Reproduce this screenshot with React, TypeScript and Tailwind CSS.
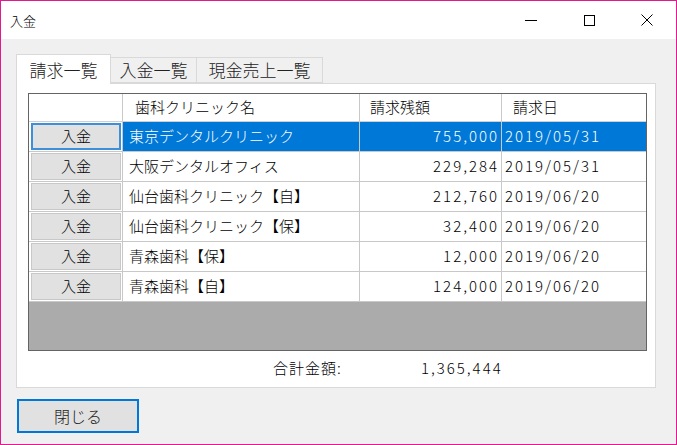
const rows = [
  { name: "東京デンタルクリニック", amount: "755,000", date: "2019/05/31" },
  { name: "大阪デンタルオフィス", amount: "229,284", date: "2019/05/31" },
  { name: "仙台歯科クリニック【自】", amount: "212,760", date: "2019/06/20" },
  { name: "仙台歯科クリニック【保】", amount: "32,400", date: "2019/06/20" },
  { name: "青森歯科【保】", amount: "12,000", date: "2019/06/20" },
  { name: "青森歯科【自】", amount: "124,000", date: "2019/06/20" },
]

const font = { fontFamily: '"Noto Sans CJK JP", "Noto Sans", sans-serif' }

export default function App() {
  return (
    <div
      className="w-[677px] h-[445px] flex flex-col border border-[#e3198f] bg-[#f0f0f0] text-black overflow-hidden font-light"
      style={font}
    >
      {/* title bar */}
      <div className="h-[38px] bg-white flex items-center shrink-0">
        <span className="pl-[9px] text-[13px] leading-none">入金</span>
        <div className="ml-auto flex h-full">
          <div className="w-[58px] flex items-center justify-center">
            <div className="w-[12px] h-px bg-black" />
          </div>
          <div className="w-[58px] flex items-center justify-center">
            <div className="w-[11px] h-[11px] border border-black" />
          </div>
          <div className="w-[58px] flex items-center justify-center">
            <svg width="12" height="12" viewBox="0 0 12 12">
              <path d="M0.5 0.5 L11.5 11.5 M11.5 0.5 L0.5 11.5" stroke="black" strokeWidth="1" />
            </svg>
          </div>
        </div>
      </div>

      {/* body */}
      <div className="flex-1 pl-[15px] pr-[20px] pt-[15px] flex flex-col">
        {/* tabs */}
        <div className="flex items-end h-[29px] relative z-10">
          <div className="w-[95px] h-[30px] bg-white border border-b-0 border-[#d9d9d9] flex items-center justify-center text-[17px] text-[#222] mb-[-1px]">
            請求一覧
          </div>
          <div className="w-[86px] h-[26px] bg-[#f0f0f0] border border-l-0 border-[#d9d9d9] flex items-center justify-center text-[17px] text-[#222]">
            入金一覧
          </div>
          <div className="w-[126px] h-[26px] bg-[#f0f0f0] border border-l-0 border-[#d9d9d9] flex items-center justify-center text-[17px] text-[#222]">
            現金売上一覧
          </div>
        </div>

        {/* panel */}
        <div className="h-[305px] bg-white border border-[#d9d9d9] pl-[11px] pr-[8px] pt-[9px] flex flex-col">
          <div className="h-[258px] border border-[#646464] bg-[#ababab] flex flex-col text-[15px]">
            {/* header */}
            <div className="flex h-[28px] bg-white border-b border-[#d0d0d0] shrink-0">
              <div className="w-[94px] border-r border-[#c8c8c8]" />
              <div className="w-[237px] border-r border-[#c8c8c8] pl-[12px] flex items-center">歯科クリニック名</div>
              <div className="w-[142px] border-r border-[#c8c8c8] pl-[10px] flex items-center">請求残額</div>
              <div className="flex-1 pl-[11px] flex items-center">請求日</div>
            </div>
            {rows.map((r, i) => {
              const sel = i === 0
              return (
                <div key={i} className="flex h-[30px] border-b border-[#c8c8c8] shrink-0">
                  <div className="w-[94px] bg-white border-r border-[#c8c8c8] p-[1px] pl-[2px]">
                    <div
                      className={`h-full flex items-center justify-center bg-[#e1e1e1] border ${
                        sel ? "border-[#3c8fd8] border-2" : "border-[#c8c8c8]"
                      }`}
                    >
                      入金
                    </div>
                  </div>
                  <div
                    className={`w-[237px] border-r border-[#c8c8c8] pl-[6px] flex items-center ${
                      sel ? "bg-[#0078d7] text-white" : "bg-white"
                    }`}
                  >
                    {r.name}
                  </div>
                  <div
                    className={`w-[142px] border-r border-[#c8c8c8] pr-[2px] flex items-center justify-end tracking-[2px] ${
                      sel ? "bg-[#0078d7] text-white" : "bg-white"
                    }`}
                  >
                    {r.amount}
                  </div>
                  <div
                    className={`flex-1 pl-[3px] flex items-center tracking-[2px] ${
                      sel ? "bg-[#0078d7] text-white" : "bg-white"
                    }`}
                  >
                    {r.date}
                  </div>
                </div>
              )
            })}
          </div>

          {/* total */}
          <div className="flex items-center h-[34px] text-[15px]">
            <span className="ml-[245px] w-[148px] tracking-[1px]">合計金額:</span>
            <span className="tracking-[2px]">1,365,444</span>
          </div>
        </div>

        {/* close button */}
        <div className="mt-[11px]">
          <button className="ml-[1px] w-[122px] h-[34px] bg-[#e1e1e1] border-2 border-[#0078d7] text-[16px] flex items-center justify-center text-[#222]">
            閉じる
          </button>
        </div>
      </div>
    </div>
  )
}
